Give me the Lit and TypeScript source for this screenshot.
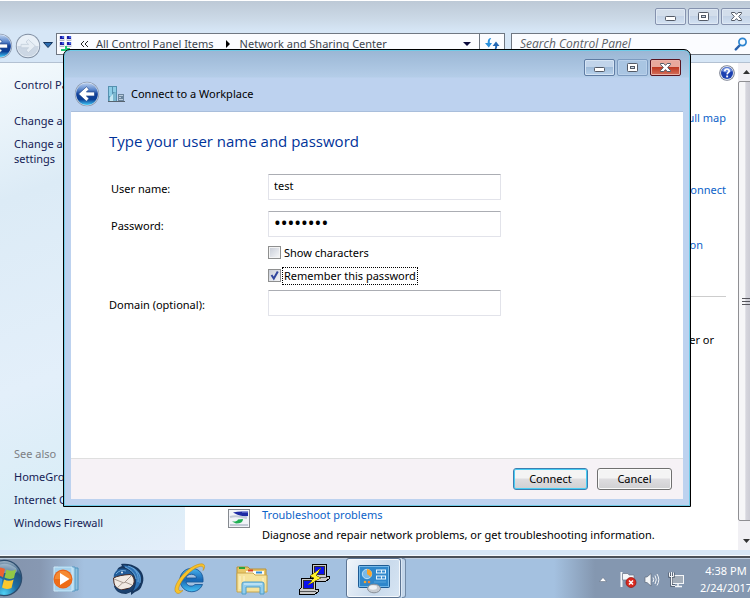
import { LitElement, html, css, svg } from "lit";
import { customElement, property, state } from "lit/decorators.js";

/* ---------- Icons ---------- */

const backArrow = (id: string) => html`<svg width="26" height="26" viewBox="0 0 26 26" aria-hidden="true">
  <defs>
    <linearGradient id=${id} x1="0" y1="0" x2="0" y2="1">
      <stop offset="0" stop-color="#b9cfee" />
      <stop offset=".3" stop-color="#5b87cc" />
      <stop offset=".5" stop-color="#12409a" />
      <stop offset=".75" stop-color="#0a3f95" />
      <stop offset="1" stop-color="#3fc4f4" />
    </linearGradient>
  </defs>
  <circle cx="13" cy="13" r="12.2" fill="#8796ad" />
  <circle cx="13" cy="13" r="11.4" fill="#e8f0fa" />
  <circle cx="13" cy="13" r="10.9" fill="url(#${id})" />
  <path d="M4.600 13 12.400 5.800 15 8.400 12.400 11H20.500V15H12.400L15 17.600 12.400 20.200Z" fill="#fff" stroke="#22498c" stroke-width=".7" />
</svg>`;

const forwardArrow = html`<svg width="26" height="26" viewBox="0 0 26 26" aria-hidden="true">
  <circle cx="13" cy="13" r="12.2" fill="#7f8da0" />
  <circle cx="13" cy="13" r="11.3" fill="#e9f0f7" />
  <path d="M2.4 13a10.6 10.6 0 0 0 21.2 0Z" fill="#ccd7e4" />
  <path d="M20.4 13 13.4 6.6 11 8.9 13.6 11.4H6V14.8H13.6L11 17.3 13.4 19.6Z" fill="#e6edf4" stroke="#c3cedb" stroke-width=".8" />
</svg>`;

const minimizeGlyph = html`<svg width="13" height="11" viewBox="0 0 13 11" aria-hidden="true">
  <rect x="1.5" y="5.500" width="10" height="4" rx=".8" fill="#fff" stroke="#535a66" />
</svg>`;
const maximizeGlyph = html`<svg width="13" height="11" viewBox="0 0 13 11" aria-hidden="true">
  <rect x="1.500" y="1.500" width="10" height="8" rx=".8" fill="#fff" stroke="#535a66" />
  <rect x="4.500" y="4.500" width="4" height="2" fill="#cfdcea" stroke="#535a66" />
</svg>`;
const closeGlyph = html`<svg width="13" height="11" viewBox="0 0 13 11" aria-hidden="true">
  <path d="M1.500 1.500H4.800L6.500 3.400 8.200 1.500H11.500V2.500L8.700 5.500 11.500 8.500V9.500H8.200L6.500 7.600 4.800 9.500H1.500V8.500L4.300 5.500 1.500 2.500Z" fill="#fff" stroke="#535a66" />
</svg>`;

const networkCenterIcon = html`<svg width="16" height="18" viewBox="0 0 16 18" aria-hidden="true">
  ${[[1, 1], [8, 1], [1, 7], [8, 7]].map(
    ([x, y]) => svg`<g>
      <rect x=${x} y=${y} width="6" height="5" fill="#dfe3ee" />
      <rect x=${x + 1} y=${y} width="4" height="3" fill="#1c1ca4" />
      <rect x=${x + 3} y=${y} width="2" height="2" fill="#3e5ee0" />
      <rect x=${x + 1} y=${y + 4} width="4" height="1" fill="#aeb4c4" />
    </g>`
  )}
  <path d="M7 11H9V13H12V16H3V14H7Z" fill="#1fc875" />
</svg>`;

const refreshIcon = html`<svg width="16" height="14" viewBox="0 0 16 14" aria-hidden="true">
  <path d="M6.500 1C4.500 1.500 3.600 3 3.700 6H1L4.800 10.500 8 6H5.800C5.600 4 6 2.500 7.200 1.600Z" fill="#2a90dc" />
  <path d="M9.800 13C11.300 12 11.200 10 11.200 9H8.600L12 4.500 15.500 9H13.200C13.200 11.500 12 13 9.800 13Z" fill="#2468b4" />
</svg>`;

const searchIcon = html`<svg width="14" height="14" viewBox="0 0 14 14" aria-hidden="true">
  <path d="M6 8 1.800 12.400" stroke="#2a62ae" stroke-width="2.400" stroke-linecap="round" />
  <circle cx="8.500" cy="5" r="3.600" fill="#f4faff" stroke="#2c84d0" stroke-width="1.700" />
</svg>`;

const helpIcon = html`<svg width="16" height="16" viewBox="0 0 16 16" aria-hidden="true">
  <circle cx="8" cy="8" r="7.800" fill="#747b8c" />
  <circle cx="8" cy="8" r="6.900" fill="#dfe5f0" />
  <circle cx="8" cy="8" r="6" fill="#1b3fb0" />
  <path d="M2.800 6A5.500 5.500 0 0 1 13.200 6Q8 9 2.800 6Z" fill="#6f8ede" />
  <path d="M5.800 6.200C5.800 3.300 10.300 3.300 10.200 6.100 10.100 7.700 8.200 7.600 8.100 9.400" fill="none" stroke="#fff" stroke-width="1.700" />
  <rect x="7.200" y="10.500" width="1.900" height="1.900" fill="#fff" />
</svg>`;

const workplaceIcon = html`<svg width="17" height="17" viewBox="0 0 17 17" aria-hidden="true">
  <rect x="0" y="0" width="9" height="16" fill="#5591b0" />
  <path d="M1 1H4V10H1ZM5 1H8V6H5Z" fill="#8ccde6" />
  <path d="M1 12 6 6.500 8 6V15H1Z" fill="#7db8d0" />
  <path d="M2 11 5 8V15H2Z" fill="#c4e8f4" />
  <rect x="10" y="8" width="6" height="8" fill="#6c869e" />
  <path d="M11 9.500H15M11 11.500H13M11 13.500H15" stroke="#bccddc" />
  <path d="M0 15.500H17" stroke="#56636f" />
</svg>`;

const troubleshootIcon = html`<svg width="22" height="19" viewBox="0 0 22 19" aria-hidden="true">
  <rect x=".5" y=".5" width="21" height="18" fill="#f2f4f8" stroke="#85898f" />
  <path d="M5 3.500Q12 2 20 3V7Q13 8 9 5.500Z" fill="#1e2aa4" />
  <path d="M14 2H20V3.500H14Z" fill="#8893dc" />
  <path d="M2 8Q8 6 19 9" fill="none" stroke="#c3c9d6" stroke-width="2" />
  <path d="M4 12.500Q9 13 10 10.500L15 10Q15 14.500 8 14.500Z" fill="#1fb054" />
  <path d="M2 16H20" stroke="#c3c9d6" stroke-width="2" />
</svg>`;

const startOrb = html`<svg width="24" height="38" viewBox="0 0 24 38" aria-hidden="true">
  <defs>
    <radialGradient id="orb" cx=".5" cy=".95" r=".95">
      <stop offset="0" stop-color="#4fd0f4" />
      <stop offset=".4" stop-color="#1f6ea4" />
      <stop offset=".75" stop-color="#22527c" />
      <stop offset="1" stop-color="#9fb4c6" />
    </radialGradient>
  </defs>
  <circle cx="4" cy="19" r="18.300" fill="#2d4d6e" />
  <circle cx="4" cy="19" r="17" fill="url(#orb)" />
  <path d="M-5 8Q5 1 16 9 19 14 12 15 4 12-9 17Z" fill="#c9d9e6" opacity=".5" />
  <path d="M-6 10Q0 7 5 10L3 18.500Q-2 15-8 18Z" fill="#ec6332" />
  <path d="M6.500 10.500Q11 13 16 10.500L14 19Q9 21 4.500 18.500Z" fill="#93c846" />
  <path d="M-8 19.500Q-3 17 2.500 20L1 28.500Q-4 24-10 27Z" fill="#3e9be0" />
  <path d="M4 20.500Q9 23 13.600 20.500L11.500 29Q6 31 2 28.500Z" fill="#fbc82e" />
</svg>`;

const mediaPlayerIcon = html`<svg width="28" height="28" viewBox="0 0 28 28" aria-hidden="true">
  <path d="M8 3H26V25H8Z" fill="#8fc0dd" stroke="#4d94be" />
  <path d="M6 2H23V26H6Z" fill="#b6dcf0" stroke="#569ac4" />
  <path d="M2 2H20V26H2Z" fill="#a4d2ee" stroke="#cfe9f8" />
  <circle cx="11" cy="14" r="9.500" fill="#e8641a" />
  <circle cx="11" cy="14" r="8.300" fill="#f58a32" />
  <path d="M2.700 14a8.300 8.300 0 0 0 16.600 0Z" fill="#ee6c16" />
  <path d="M8 8 17.500 14 8 20Z" fill="#fff" />
</svg>`;

const mailIcon = html`<svg width="34" height="32" viewBox="0 0 34 32" aria-hidden="true">
  <path d="M7 9C5 6 8 4 11 3L10 1C15 0 22 1 27 5 32 9 34 16 31 22 30 26 27 28 24 29L20 32 20 29 15 31C9 31 4 28 3 23L8 20 19 12Z" fill="#17375f" />
  <path d="M12 2.500C20 2 27 6 29.500 12 31 19 28 25 22 28 26 22 26 15 22 10 19 7 15 5 12 2.500Z" fill="#2f72b4" />
  <path d="M17 3C25 5 28 12 27 19M22 5C28 9 30 14 29 20M14 4C21 7 24 11 25 16" fill="none" stroke="#78b4e2" stroke-width=".8" />
  <path d="M3 15C2 12 4 8 8 6 14 4 20 8 22 12L14 16Z" fill="#225c98" />
  <path d="M5 11Q9 6 15 8" fill="none" stroke="#6fa9d8" />
  <path d="M2.500 15Q8 12 19 11.500 22 12 23 16 24 22 19 25L10 27Q4 25 3 20Z" fill="#f1eae3" stroke="#4a2c24" />
  <path d="M3 16 13 20 20.500 12.500M6 25 12 19.500M14 19 21 22" fill="none" stroke="#a89a90" />
  <path d="M3 22C6 26 9 27.500 13 27 17 26.500 20 25 23 21 23 26 20 29 16 30L11 29.500C7 29 4 26 3 22Z" fill="#1c426f" />
  <circle cx="11" cy="9.500" r="1" fill="#e9f2fa" />
</svg>`;

const ieIcon = html`<svg width="34" height="32" viewBox="0 0 34 32" aria-hidden="true">
  <defs>
    <linearGradient id="ie" x1="0" y1="0" x2="0" y2="1">
      <stop offset="0" stop-color="#49b4ee" />
      <stop offset=".5" stop-color="#1766b4" />
      <stop offset="1" stop-color="#46c2f4" />
    </linearGradient>
  </defs>
  <path d="M30 19H13C13.500 23 19 24.500 22 21.500H29.500C27 28 20 30 14.500 28 8 25.500 5 18 8 12 11 5.500 19 3.500 25 7 29 9.500 30.500 14 30 19ZM13 15H23.500C23 10 14 10 13 15Z" fill="url(#ie)" stroke="#124f90" stroke-width=".8" fill-rule="evenodd" />
  <path d="M5 30.500C-2 29 4 17 12 9.500 20 2 30-1.500 31.500 2.500 32 4 31 6.500 30 7.500 31 4 29.500 2.800 26.500 3.500 18 6 8 17 6 24 5 27.500 6.500 28.500 10 27.500 8 29.500 6.500 30.500 5 30.500Z" fill="#f8c22a" stroke="#bd850c" stroke-width=".5" />
</svg>`;

const folderIcon = html`<svg width="34" height="32" viewBox="0 0 34 32" aria-hidden="true">
  <path d="M2 4H13L15 6H31V27H2Z" fill="#e9c766" stroke="#b99238" />
  <path d="M4 5H10" stroke="#29a43a" stroke-width="2" />
  <path d="M11 8H29V12H11Z" fill="#fffdf3" />
  <path d="M13 7.500H18" stroke="#dd4425" stroke-width="2" />
  <path d="M21 9.500H27" stroke="#2c8bd8" stroke-width="2" />
  <path d="M2 10H18L20 12H32V29H2Z" fill="#f6e39c" stroke="#c8a54a" />
  <path d="M5 13V26M9 13V20M28 15V20" stroke="#fdf4cb" />
  <path d="M7 31V21Q7 19 9 19H27Q29 19 29 21V31H25V24H11V31Z" fill="#92cdec" stroke="#4e9dc8" />
  <path d="M9 21H27" stroke="#e0f4fc" />
</svg>`;

const puttyIcon = html`<svg width="32" height="32" viewBox="0 0 32 32" aria-hidden="true" shape-rendering="crispEdges">
  <path d="M14 1H28V13H31V16L28 18H12V14L14 12Z" fill="#c9c9c9" stroke="#000" />
  <rect x="16" y="3" width="10" height="8" fill="#0b12ee" stroke="#333" />
  <path d="M13 14H29" stroke="#555" />
  <path d="M3 15H17V26H20V29L17 31H1V27L3 25Z" fill="#c9c9c9" stroke="#000" />
  <rect x="5" y="17" width="10" height="8" fill="#0b12ee" stroke="#333" />
  <path d="M2 28H18" stroke="#555" />
  <path d="M23 5 12 13 16 15 10 22 23 15 18 12.500Z" fill="#fff22b" stroke="#5f5a00" stroke-width=".6" />
</svg>`;

const controlPanelIcon = html`<svg width="34" height="32" viewBox="0 0 34 32" aria-hidden="true">
  <rect x="1.500" y="3.500" width="31" height="22" rx="1" fill="#2f87cb" stroke="#1d5b94" />
  <rect x="2.500" y="4.500" width="29" height="20" fill="none" stroke="#74b8e8" />
  <circle cx="10" cy="12" r="4.700" fill="#79b9e8" stroke="#bfe0f6" />
  <path d="M10 12V7A5 5 0 0 1 14 15Z" fill="#f7a52c" />
  <path d="M19 9.500H29M19 15.500H29" stroke="#e8f5fd" stroke-width="4" />
  <path d="M20 9.500H24M25 9.500H28M20 15.500H24M25 15.500H28" stroke="#368bd0" stroke-width="2" />
  <circle cx="8" cy="20" r="1.300" fill="#f7a52c" />
  <circle cx="12" cy="20" r="1.300" fill="#f4812a" />
  <path d="M17 20H29" stroke="#5aa6dc" />
  <ellipse cx="17" cy="26.500" rx="6.500" ry="4.300" fill="#c7ccd2" stroke="#8a9098" />
  <ellipse cx="16" cy="25.500" rx="4" ry="2.200" fill="#eff2f4" />
</svg>`;

const flagIcon = html`<svg width="18" height="18" viewBox="0 0 18 18" aria-hidden="true">
  <path d="M2.500 1V16" stroke="#f4f6f8" stroke-width="2" />
  <path d="M3.500 2.500H9L10 4H15V10H9L8 9H3.500Z" fill="#f6f8fa" stroke="#6b7686" stroke-width=".7" />
  <circle cx="12" cy="11.500" r="5" fill="#d8281e" stroke="#8f1410" stroke-width=".7" />
  <path d="M10 9.500 14 13.500M14 9.500 10 13.500" stroke="#fff" stroke-width="1.600" />
</svg>`;
const speakerIcon = html`<svg width="18" height="18" viewBox="0 0 18 18" aria-hidden="true">
  <path d="M2 6H4L8 2.500V15L4 11.500H2Z" fill="#f4f6f8" stroke="#5e6b7c" stroke-width=".7" />
  <path d="M10 6.500Q11.500 8.700 10 11M12 4.500Q14.600 8.700 12 13M14 3Q17.600 8.700 14 14.500" fill="none" stroke="#f4f6f8" />
</svg>`;
const lanIcon = html`<svg width="18" height="18" viewBox="0 0 18 18" aria-hidden="true">
  <rect x="5.500" y="4.500" width="11" height="8" fill="#a3adb9" stroke="#f4f6f8" />
  <path d="M8 15.500H15M11 13V15" stroke="#f4f6f8" stroke-width="1.500" />
  <path d="M2.500 1.500V5.500H6.500V1.500M4.500 5.500V14.500H8" fill="none" stroke="#4d5969" stroke-width="2.400" />
  <path d="M2.500 1.500V5.500H6.500V1.500M4.500 1V14.500H8" fill="none" stroke="#f4f6f8" />
</svg>`;

/* ---------- Caption buttons ---------- */

@customElement("caption-buttons")
export class CaptionButtons extends LitElement {
  @property({ type: Boolean }) active = false;

  static styles = css`
    :host {
      display: flex;
      gap: 2px;
      flex: none;
    }
    button {
      box-sizing: border-box;
      display: flex;
      align-items: center;
      justify-content: center;
      width: 31px;
      height: 17px;
      padding: 0;
      border: 1px solid #8592ae;
      border-radius: 2px;
      background: linear-gradient(#d3deeb 45%, #c4d3e6 50%, #d3e2f3);
      box-shadow: inset 0 0 0 1px #dfe9f4;
    }
    .active {
      border-color: #5f7ca3;
      background: linear-gradient(#c1d4ea 45%, #9fbbd9 50%, #b8d2ec);
      box-shadow: inset 0 0 0 1px #d5e4f4;
    }
    .active.disabled {
      border-color: #7d9bc0;
      background: #a9c5e2;
      box-shadow: inset 0 0 0 1px #b9d0ea;
    }
    .active.close {
      border-color: #5a1420;
      background: linear-gradient(#e9a99c 45%, #bf3a22 50%, #d4705c);
      box-shadow: inset 0 0 0 1px #eab2a8;
    }
  `;

  render() {
    const tone = this.active ? "active" : "";
    return html`
      <button class="${tone}" aria-label="Minimize">${minimizeGlyph}</button>
      <button class="${tone} disabled" aria-label="Maximize">${maximizeGlyph}</button>
      <button class="${tone} close" aria-label="Close">${closeGlyph}</button>
    `;
  }
}

/* ---------- Control Panel window ---------- */

@customElement("explorer-window")
export class ExplorerWindow extends LitElement {
  static styles = css`
    :host {
      display: flex;
      flex-direction: column;
      flex: 1;
      min-height: 0;
      overflow: hidden;
      background: #d6e6f6;
    }
    .header {
      flex: none;
      height: 61px;
      background: linear-gradient(#bdc9d6, #cddbe9 20px, #d6e6f6 30px);
      border-bottom: 1px solid #b3c1d2;
      overflow: hidden;
    }
    .caption {
      display: flex;
      justify-content: flex-end;
      height: 25px;
      padding-top: 7px;
      margin-right: -2px;
      box-sizing: content-box;
    }
    .nav {
      display: flex;
      align-items: flex-start;
      height: 26px;
    }
    .round {
      flex: none;
      width: 26px;
      height: 26px;
      padding: 0;
      border: 0;
      background: none;
    }
    .back {
      margin-left: -13px;
    }
    .forward {
      margin-left: 2px;
    }
    .caret {
      flex: none;
      width: 10px;
      height: 6px;
      margin: 9px 3px 0 2px;
    }
    .address,
    .search {
      box-sizing: border-box;
      display: flex;
      align-items: center;
      height: 22px;
      border: 1px solid #6f7782;
      background: #fbfcff;
      color: #3d454d;
    }
    .address {
      flex: 1;
      gap: 8px;
      min-width: 0;
      padding-left: 1px;
      white-space: nowrap;
    }
    .address a {
      color: inherit;
      text-decoration: none;
    }
    .chevrons {
      margin: 0 -1px 0 -2px;
    }
    .tri {
      flex: none;
      margin: 0 1px 0 3px;
    }
    .drop {
      margin-left: auto;
    }
    .refresh {
      display: flex;
      align-items: center;
      justify-content: center;
      width: 25px;
      height: 20px;
      padding: 0;
      border: 0;
      border-left: 1px solid #6f7782;
      background: none;
    }
    .search {
      flex: none;
      width: 241px;
      margin: 0 -2px 0 6px;
      padding: 0 3px 0 8px;
    }
    .search input {
      flex: 1;
      min-width: 0;
      padding: 0;
      border: 0;
      outline: 0;
      background: none;
      font: italic 12px/20px "Open Sans", "Noto Sans", sans-serif;
      color: #555;
    }
    .search input::placeholder {
      color: #5c6066;
    }
    .body {
      display: flex;
      flex: 1;
      min-height: 0;
      background: #fff;
    }
    .side {
      box-sizing: border-box;
      display: flex;
      flex-direction: column;
      flex: none;
      width: 185px;
      padding: 14px 14px 20px;
      gap: 8px;
      line-height: 15px;
      background: linear-gradient(160deg, #f4fafd 0, #dcebf6 25%, #e3effa 60%, #d8edf6 85%, #e4eefa);
    }
    .side a {
      color: #151c55;
      text-decoration: none;
    }
    .home {
      margin-bottom: 13px;
    }
    .see {
      margin-top: auto;
      color: #7c7f84;
    }
    .content {
      display: flex;
      flex-direction: column;
      flex: 1;
      min-width: 0;
      padding: 2px 12px 7px 43px;
      box-sizing: border-box;
      line-height: 16px;
      color: #000;
    }
    .content a {
      color: #0b62c8;
      text-decoration: none;
    }
    .right {
      align-self: flex-end;
    }
    .help {
      width: 16px;
      height: 16px;
      margin: 0 -9px 29px 0;
      padding: 0;
      border: 0;
      background: none;
    }
    .map {
      margin-bottom: 56px;
    }
    .toggle {
      margin-bottom: 39px;
    }
    .lan {
      margin: 0 23px 43px 0;
    }
    .rule {
      width: 100%;
      margin: 0 0 35px;
      border: 0;
      border-top: 1px solid #cdcdcd;
    }
    .setup {
      margin: 0 12px 0 0;
    }
    .trouble {
      display: flex;
      gap: 12px;
      margin-top: auto;
    }
    .trouble svg {
      flex: none;
      margin-top: 2px;
    }
    .trouble p {
      margin: 4px 0 0;
      white-space: nowrap;
    }
    .scroll {
      display: flex;
      flex-direction: column;
      flex: none;
      width: 17px;
      margin-right: -5px;
      background: #f1f0f4;
    }
    .scroll button {
      flex: none;
      display: flex;
      align-items: center;
      justify-content: center;
      height: 18px;
      padding: 0;
      border: 0;
      background: #f1f0f4;
    }
    .scroll .thumb {
      box-sizing: border-box;
      flex: 1;
      border: 1px solid #8f8f93;
      border-radius: 2px;
      background: linear-gradient(90deg, #f6f6f8 0 40%, #d6d6de 45%, #c4c4ce);
      margin-bottom: 11px;
    }
    .frame {
      flex: none;
      height: 5px;
      border-bottom: 1px solid #f6fafe;
      background: #d6e6f6;
    }
  `;

  render() {
    return html`
      <div class="header">
        <div class="caption"><caption-buttons></caption-buttons></div>
        <div class="nav">
          <button class="round back" aria-label="Back">${backArrow("exBack")}</button>
          <button class="round forward" aria-label="Forward">${forwardArrow}</button>
          <svg class="caret" viewBox="0 0 10 6"><path d="M.5.5H9.500L5 5.500Z" fill="#2b6cb0" stroke="#16365e" /></svg>
          <div class="address">
            ${networkCenterIcon}
            <svg class="chevrons" width="9" height="8" viewBox="0 0 9 8"><path d="M4 1 1 4 4 7M8 1 5 4 8 7" fill="none" stroke="#222" /></svg>
            <a href="#items">All Control Panel Items</a>
            <svg class="tri" width="6" height="8" viewBox="0 0 6 8"><path d="M1 0 5 4 1 8Z" fill="#000" /></svg>
            <a href="#network">Network and Sharing Center</a>
            <svg class="drop" width="8" height="4" viewBox="0 0 8 4"><path d="M0 0H8L4 4Z" fill="#0a0a3c" /></svg>
            <button class="refresh" aria-label="Refresh">${refreshIcon}</button>
          </div>
          <div class="search">
            <input type="search" aria-label="Search Control Panel" placeholder="Search Control Panel" />
            ${searchIcon}
          </div>
        </div>
      </div>
      <div class="body">
        <nav class="side">
          <a class="home" href="#home">Control Panel Home</a>
          <a href="#adapter">Change adapter settings</a>
          <a href="#sharing">Change advanced sharing<br />settings</a>
          <span class="see">See also</span>
          <a href="#homegroup">HomeGroup</a>
          <a href="#internet">Internet Options</a>
          <a href="#firewall">Windows Firewall</a>
        </nav>
        <main class="content">
          <button class="help right" aria-label="Help">${helpIcon}</button>
          <a class="right map" href="#map">See full map</a>
          <a class="right toggle" href="#toggle">Connect or disconnect</a>
          <a class="right lan" href="#lan">Local Area Connection</a>
          <hr class="rule" />
          <p class="right setup">ad hoc, or VPN connection; or set up a router or</p>
          <div class="trouble">
            ${troubleshootIcon}
            <div>
              <a href="#troubleshoot">Troubleshoot problems</a>
              <p>Diagnose and repair network problems, or get troubleshooting information.</p>
            </div>
          </div>
        </main>
        <div class="scroll">
          <button aria-label="Scroll up"><svg width="7" height="4" viewBox="0 0 7 4"><path d="M0 4 3.500 0 7 4Z" fill="#333" /></svg></button>
          <button class="thumb" aria-label="Scroll position">
            <svg width="9" height="9" viewBox="0 0 9 9"><path d="M0 1.500H9M0 4.500H9M0 7.500H9" stroke="#55555c" /></svg>
          </button>
          <button aria-label="Scroll down"><svg width="7" height="4" viewBox="0 0 7 4"><path d="M0 0H7L3.500 4Z" fill="#333" /></svg></button>
        </div>
      </div>
      <div class="frame"></div>
    `;
  }
}

/* ---------- Connection dialog ---------- */

@customElement("connect-dialog")
export class ConnectDialog extends LitElement {
  @state() private reveal = false;

  static styles = css`
    :host {
      box-sizing: border-box;
      display: flex;
      flex-direction: column;
      border: 1px solid #000;
      border-radius: 7px 7px 0 0;
      padding: 0 6px 6px;
      background: linear-gradient(#9ab6d4, #b4cde8 27px, #bdd2ef 28px);
      box-shadow: inset 0 0 0 1px #6fcbe8;
      color: #000;
    }
    .caption {
      display: flex;
      justify-content: flex-end;
      flex: none;
      height: 18px;
      padding: 9px 3px 0 0;
    }
    .bar {
      display: flex;
      align-items: center;
      flex: none;
      height: 34px;
      padding-left: 4px;
    }
    .bar button {
      width: 26px;
      height: 26px;
      margin-right: 8px;
      padding: 0;
      border: 0;
      background: none;
    }
    .title {
      margin: 0 0 0 6px;
      font-size: 11px;
      font-weight: 400;
    }
    form {
      display: flex;
      flex-direction: column;
      flex: 1;
      margin: 0 1px 1px;
      border-top: 1px solid #a9bedb;
      background: #fff;
    }
    .page {
      flex: 1;
      padding: 18px 38px 0;
    }
    h2 {
      margin: 0 0 22px;
      font: 15px/22px "Open Sans", "Noto Sans", sans-serif;
      color: #003399;
    }
    .fields {
      display: grid;
      grid-template-columns: 159px 233px;
      align-items: center;
    }
    .fields > label {
      padding-top: 4px;
    }
    .indent {
      padding-left: 2px;
    }
    .text {
      box-sizing: border-box;
      width: 100%;
      height: 26px;
      padding: 0 6px 4px 5px;
      border: 1px solid #e2e3ea;
      border-top-color: #abadb3;
      border-radius: 1px;
      outline: 0;
      background: #fff;
      font: 11px/20px var(--ui-font);
      color: #000;
    }
    .text[type="password"] {
      font-size: 18px;
    }
    .gap {
      margin-bottom: 11px;
    }
    .checks {
      grid-column: 2;
      margin: 4px 0 3px;
    }
    .check {
      display: flex;
      align-items: center;
      height: 23px;
      gap: 2px;
    }
    .check input {
      appearance: none;
      box-sizing: border-box;
      flex: none;
      width: 13px;
      height: 13px;
      margin: 0;
      border: 1px solid #8e8f8f;
      background: linear-gradient(135deg, #c9ced8, #f4f5f7) content-box, #f4f4f4;
      padding: 1px;
      outline: 0;
    }
    .check input:checked {
      background: url("data:image/svg+xml,%3Csvg xmlns='http://www.w3.org/2000/svg' viewBox='0 0 11 11'%3E%3Cpath d='M2.500 5 4.800 8.500 8.800 1.500' fill='none' stroke='%2331479e' stroke-width='2'/%3E%3C/svg%3E"),
        linear-gradient(135deg, #c9ced8, #f4f5f7);
    }
    .check label {
      padding: 0 1px;
      line-height: 16px;
      border: 1px solid transparent;
      white-space: nowrap;
    }
    .check .focused {
      border: 1px dotted #000;
    }
    .check label {
      margin-left: -1px;
    }
    .footer {
      display: flex;
      justify-content: flex-end;
      align-items: flex-start;
      flex: none;
      gap: 9px;
      padding: 9px 11px;
      border-top: 1px solid #dfdfdf;
      background: #f6f2f6;
    }
    .push {
      box-sizing: border-box;
      width: 75px;
      height: 22px;
      padding: 0;
      border: 1px solid #707070;
      border-radius: 3px;
      background: linear-gradient(#f4f4f4 45%, #dedde0 50%, #d0d0d2);
      box-shadow: inset 0 0 0 1px #fbfbfb;
      font: 11px/18px var(--ui-font);
      color: #000;
    }
    .default {
      border-color: #3c7fb1;
      box-shadow: inset 0 0 0 1px #48cdf4;
    }
  `;

  private toggle(e: Event) {
    this.reveal = (e.target as HTMLInputElement).checked;
  }

  render() {
    return html`
      <div class="caption"><caption-buttons active></caption-buttons></div>
      <div class="bar">
        <button aria-label="Back">${backArrow("dlgBack")}</button>
        ${workplaceIcon}
        <h1 class="title">Connect to a Workplace</h1>
      </div>
      <form @submit=${(e: Event) => e.preventDefault()}>
        <div class="page">
          <h2>Type your user name and password</h2>
          <div class="fields">
            <label class="indent gap" for="user">User name:</label>
            <input class="text gap" id="user" type="text" value="test" autocomplete="off" />
            <label class="indent" for="pass">Password:</label>
            <input class="text" id="pass" type=${this.reveal ? "text" : "password"} value="password" autocomplete="off" />
            <div class="checks">
              <div class="check">
                <input id="show" type="checkbox" @change=${this.toggle} />
                <label for="show">Show characters</label>
              </div>
              <div class="check">
                <input id="remember" type="checkbox" checked />
                <label class="focused" for="remember">Remember this password</label>
              </div>
            </div>
            <label for="domain">Domain (optional):</label>
            <input class="text" id="domain" type="text" />
          </div>
        </div>
        <div class="footer">
          <button class="push default" type="submit">Connect</button>
          <button class="push" type="button">Cancel</button>
        </div>
      </form>
    `;
  }
}

/* ---------- Taskbar ---------- */

@customElement("task-bar")
export class TaskBar extends LitElement {
  static styles = css`
    :host {
      box-sizing: border-box;
      display: flex;
      flex: none;
      align-items: stretch;
      height: 42px;
      overflow: hidden;
      border-top: 2px solid #4a5058;
      background: linear-gradient(
        90deg,
        #8494ad 0,
        #8798b2 40px,
        #a4c1e0 84px,
        #a4c1e0 calc(100% - 196px),
        #8497b0 calc(100% - 155px)
      );
      box-shadow: inset 0 1px 0 #bccde0;
    }
    button {
      display: flex;
      align-items: center;
      justify-content: center;
      flex: none;
      padding: 0;
      border: 0;
      background: none;
    }
    .start {
      width: 35px;
      justify-content: flex-start;
    }
    .app {
      width: 62px;
      padding-top: 2px;
    }
    .open {
      box-sizing: border-box;
      width: 55px;
      margin-left: 1px;
      border: 1px solid #5d7593;
      border-radius: 3px;
      background: linear-gradient(115deg, #f1f6fb, #c9daec 60%, #d7e5f3);
      box-shadow: inset 0 0 0 1px #f4f8fc;
    }
    .stack {
      width: 3px;
      border: 1px solid #7089a6;
      border-left-color: #dbe7f3;
      border-radius: 0 3px 3px 0;
      background: #c2d5e9;
    }
    .tray {
      display: flex;
      align-items: center;
      gap: 6px;
      margin-left: auto;
      margin-right: -4px;
    }
    .more {
      width: 10px;
      height: 18px;
      margin-right: 5px;
    }
    .tray button {
      padding-top: 3px;
    }
    .clock {
      width: 56px;
      margin-left: 7px;
      padding-top: 2px;
      font-size: 11px;
      line-height: 17px;
      text-align: center;
      color: #fff;
      white-space: nowrap;
    }
  `;

  render() {
    const apps: [string, unknown][] = [
      ["Windows Media Player", mediaPlayerIcon],
      ["Thunderbird", mailIcon],
      ["Internet Explorer", ieIcon],
      ["Windows Explorer", folderIcon],
      ["PuTTY", puttyIcon],
    ];
    return html`
      <button class="start" aria-label="Start">${startOrb}</button>
      ${apps.map(([name, icon]) => html`<button class="app" aria-label=${name}>${icon}</button>`)}
      <button class="open" aria-label="Control Panel">${controlPanelIcon}</button>
      <span class="stack"></span>
      <div class="tray">
        <button class="more" aria-label="Show hidden icons">
          <svg width="8" height="5" viewBox="0 0 8 5"><path d="M.5 4.500 4 .5 7.500 4.500Z" fill="#fff" stroke="#5b6778" stroke-width=".5" /></svg>
        </button>
        <button aria-label="Action Center">${flagIcon}</button>
        <button aria-label="Volume">${speakerIcon}</button>
        <button aria-label="Network">${lanIcon}</button>
        <div class="clock">4:38 PM<br />2/24/2017</div>
      </div>
    `;
  }
}

/* ---------- Desktop ---------- */

@customElement("app-root")
export class AppRoot extends LitElement {
  static styles = css`
    :host {
      --ui-font: "Noto Sans", "Open Sans", sans-serif;
      box-sizing: border-box;
      position: relative;
      display: flex;
      flex-direction: column;
      height: 100vh;
      padding: 1px 0 2px;
      overflow: hidden;
      background: #fff;
      font: 11px/16px var(--ui-font);
    }
    .dialog {
      position: absolute;
      inset: 49px 59px 93px 63px;
    }
  `;

  render() {
    return html`
      <explorer-window></explorer-window>
      <task-bar></task-bar>
      <connect-dialog class="dialog"></connect-dialog>
    `;
  }
}
